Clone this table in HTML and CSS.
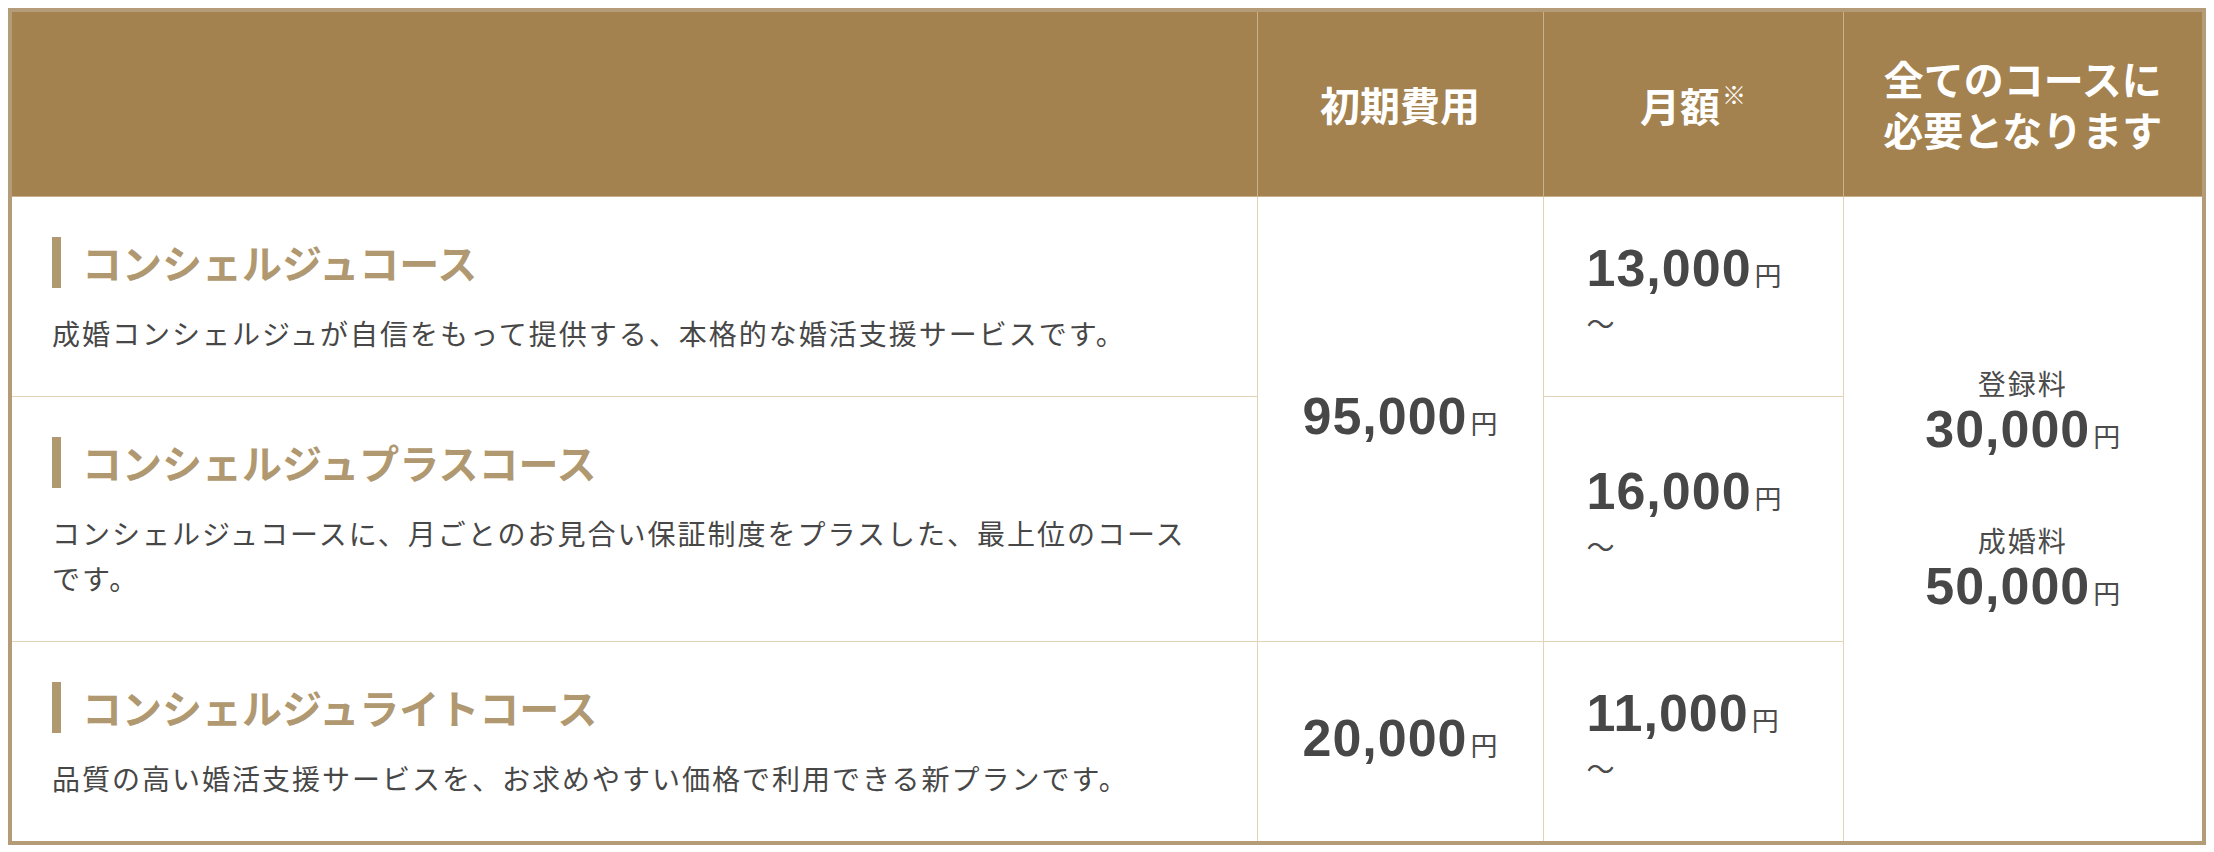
FILE: index.html
```html
<!DOCTYPE html>
<html lang="ja">
<head>
<meta charset="utf-8">
<title>料金プラン</title>
<link rel="stylesheet" href="styles.css">
</head>
<body>
<div class="plan">
  <table class="plan-table">
    <colgroup>
      <col class="c-course">
      <col class="c-init">
      <col class="c-month">
      <col class="c-all">
    </colgroup>
    <thead>
      <tr>
        <th class="h-blank"></th>
        <th>初期費用</th>
        <th><span class="h-month">月額</span><span class="note">※</span></th>
        <th class="h-all">全てのコースに<br>必要となります</th>
      </tr>
    </thead>
    <tbody>
      <tr>
        <td class="course">
          <h3 class="course-title">コンシェルジュコース</h3>
          <p class="course-desc">成婚コンシェルジュが自信をもって提供する、本格的な婚活支援サービスです。</p>
        </td>
        <td class="init" rowspan="2"><span class="num">95,000</span><span class="yen">円</span></td>
        <td class="month">
          <div class="price"><span class="num">13,000</span><span class="yen">円</span></div>
          <div class="tilde">〜</div>
        </td>
        <td class="all" rowspan="3">
          <div class="fee">
            <div class="fee-label">登録料</div>
            <div class="fee-num"><span class="num">30,000</span><span class="yen">円</span></div>
          </div>
          <div class="fee">
            <div class="fee-label">成婚料</div>
            <div class="fee-num"><span class="num">50,000</span><span class="yen">円</span></div>
          </div>
        </td>
      </tr>
      <tr>
        <td class="course">
          <h3 class="course-title">コンシェルジュプラスコース</h3>
          <p class="course-desc">コンシェルジュコースに、月ごとのお見合い保証制度をプラスした、最上位のコースです。</p>
        </td>
        <td class="month">
          <div class="price"><span class="num">16,000</span><span class="yen">円</span></div>
          <div class="tilde">〜</div>
        </td>
      </tr>
      <tr>
        <td class="course">
          <h3 class="course-title">コンシェルジュライトコース</h3>
          <p class="course-desc">品質の高い婚活支援サービスを、お求めやすい価格で利用できる新プランです。</p>
        </td>
        <td class="init"><span class="num">20,000</span><span class="yen">円</span></td>
        <td class="month">
          <div class="price"><span class="num">11,000</span><span class="yen">円</span></div>
          <div class="tilde">〜</div>
        </td>
      </tr>
    </tbody>
  </table>
</div>
</body>
</html>
```

FILE: styles.css
```css
html, body {
  background: #ffffff;
}

body {
  margin: 8px;
  font-family: "Noto Sans CJK JP", "Noto Sans", sans-serif;
  color: #4b4b4b;
}

.plan {
  border: 4px solid #b39c77;
  background: #ffffff;
}

.plan-table {
  width: 100%;
  table-layout: fixed;
  border-collapse: collapse;
  border-style: hidden;
}

.c-course { width: 1245px; }
.c-init { width: 286px; }
.c-month { width: 300px; }
.c-all { width: 359px; }

/* header */
.plan-table th {
  height: 184px;
  padding: 0;
  background: #a38250;
  color: #ffffff;
  font-size: 40px;
  font-weight: 700;
  line-height: 44px;
  text-align: center;
  vertical-align: middle;
  border: 1px solid #c9b28b;
}

.plan-table th.h-all {
  line-height: 51px;
}

.note {
  display: inline-block;
  margin-left: 2px;
  font-size: 24px;
  line-height: 24px;
  vertical-align: 18px;
  font-weight: 700;
}

/* body cells */
.plan-table td {
  padding: 0;
  border: 1px solid #e2d3b6;
  vertical-align: middle;
}

.plan-table td.course {
  padding: 40px 50px 40px 40px;
}

.course-title {
  margin: 0 0 23px;
  padding-left: 21px;
  border-left: 9px solid #b09871;
  color: #b09871;
  font-size: 40px;
  font-weight: 700;
  line-height: 51px;
}

.course-desc {
  margin: 0;
  font-size: 28px;
  letter-spacing: 2px;
  line-height: 45px;
  color: #474747;
}

.num {
  font-family: "Liberation Sans", Arial, sans-serif;
  font-size: 52px;
  font-weight: 700;
  letter-spacing: 1px;
  color: #474747;
}

.yen {
  margin-left: 3px;
  font-size: 27px;
  font-weight: 400;
  color: #4b4b4b;
}

.plan-table td.init {
  text-align: center;
  line-height: 62px;
  padding: 4px 0 0;
}

.plan-table td.month {
  text-align: left;
  padding: 0 0 10px 43px;
}

.price {
  line-height: 52px;
}

.tilde {
  font-size: 28px;
  line-height: 36px;
  color: #4b4b4b;
}

.plan-table td.all {
  text-align: center;
  padding: 0 0 49px;
}

.fee + .fee {
  margin-top: 54px;
}

.fee-label {
  font-size: 28px;
  letter-spacing: 2px;
  line-height: 36px;
  color: #4b4b4b;
}

.fee-num {
  line-height: 56px;
}
```
